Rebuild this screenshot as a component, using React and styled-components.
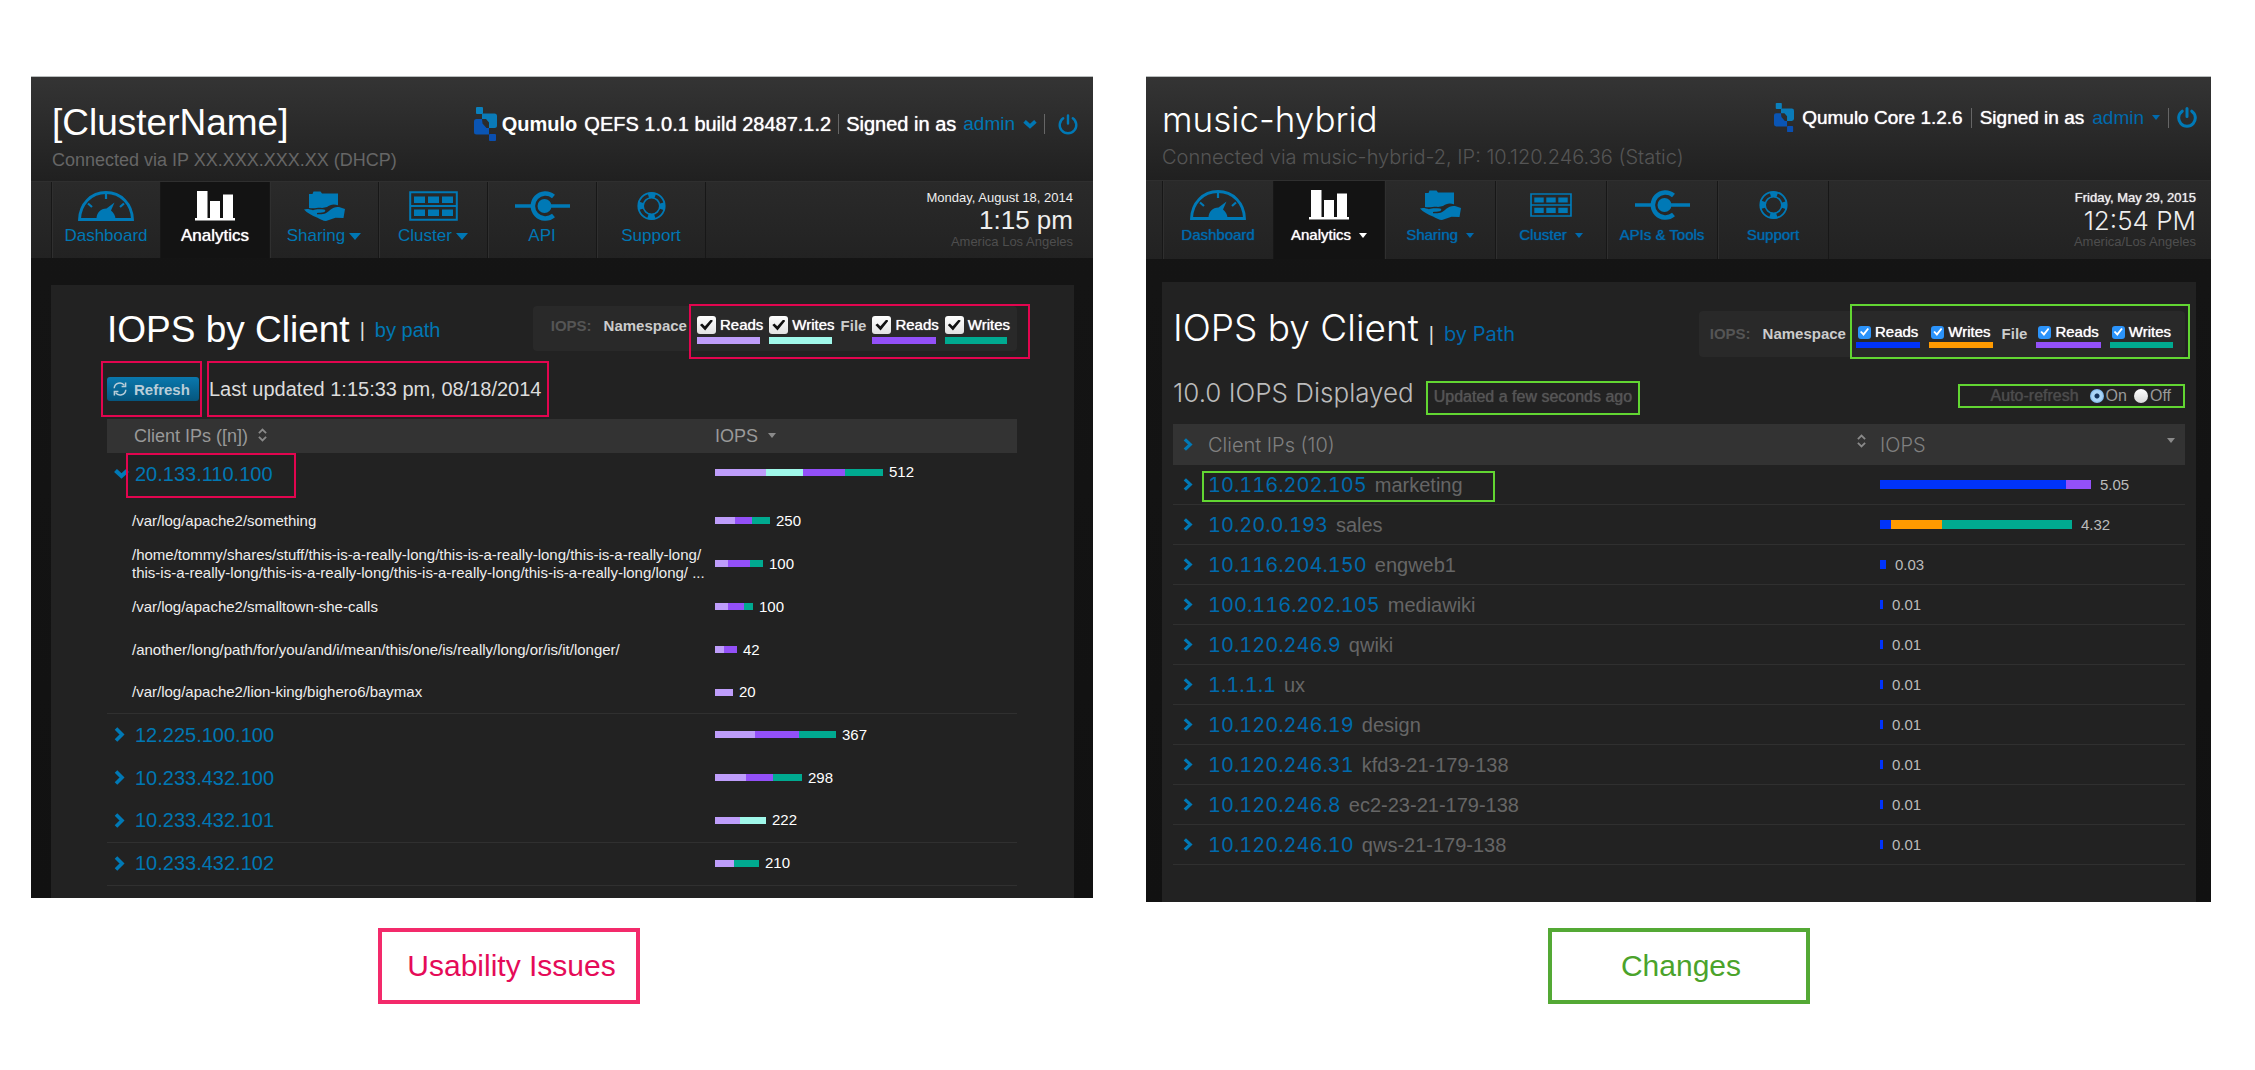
import React from "react";
import styled, { createGlobalStyle, css, ThemeProvider } from "styled-components";

const sans = '"Liberation Sans", Arial, Helvetica, sans-serif';
const light = 'Inter, "Liberation Sans", Arial, sans-serif';

const colors = {
  lavender: "#be9dfa",
  mint: "#a0f8ea",
  violet: "#9350f8",
  green: "#00aa90",
  blue: "#0033fa",
  orange: "#ff9a00",
};

const legacy = {
  name: "legacy",
  link: "#0077b3",
  icon: "#0079b6",
  mark: "#e2054f",
  lightFont: sans,
  lightWeight: 400,
  titleSize: 37,
  headingSize: 37,
  subSize: 18,
  subTop: 5,
  subColor: "#666",
  headerPad: "26px 15px 0 21px",
  headerHeight: 105,
  userTop: 4,
  userGap: 7,
  userSize: 20,
  navHeight: 77,
  navLead: 20,
  tabWidth: 109,
  tabSize: 17,
  clockPad: "7px 20px 0 0",
  bodyPad: "27px 19px 0 20px",
  panelPad: "21px 57px 12px 56px",
  headingLine: 48,
  headingAlign: "center",
  filterTop: 0,
  filterPad: "10px 7px 7px 18px",
  thHeight: 34,
  thSize: 18,
  thColor: "#999",
  ipSize: 20,
  ipGap: 5,
  chevronPad: 7,
  chevronBox: 16,
  valueColor: "#fff",
  valueGap: 6,
  barHeight: 7,
  iopsWidth: 302,
  labelBorder: "#f32a6b",
  labelText: "#e50b58",
};

const current = {
  name: "current",
  link: "#006aad",
  icon: "#0079b6",
  mark: "#62d632",
  lightFont: light,
  lightWeight: 300,
  titleSize: 35,
  headingSize: 37,
  subSize: 20,
  subTop: 6,
  subColor: "#555",
  headerPad: "22px 14px 0 16px",
  headerHeight: 104,
  userTop: 4,
  userGap: 8,
  userSize: 19,
  navHeight: 79,
  navLead: 16,
  tabWidth: 111,
  tabSize: 15,
  clockPad: "8px 15px 0 0",
  bodyPad: "23px 15px 0 16px",
  panelPad: "26px 11px 37px 11px",
  headingLine: 40,
  headingAlign: "baseline",
  filterTop: 3,
  filterPad: "13px 12px 9px 11px",
  thHeight: 41,
  thSize: 20,
  thColor: "#808080",
  ipSize: 20,
  ipGap: 15,
  chevronPad: 10,
  chevronBox: 10,
  valueColor: "#bbb",
  valueGap: 9,
  barHeight: 9,
  iopsWidth: 305,
  labelBorder: "#54a935",
  labelText: "#4ba32b",
};

const GlobalStyle = createGlobalStyle`
  * { box-sizing: border-box; }
  body { margin: 0; background: #fff; font-family: ${sans}; }
  a { text-decoration: none; color: inherit; }
  button { font: inherit; color: inherit; background: none; border: 0; padding: 0; }
  h1, h2, p, figure { margin: 0; font-weight: 400; }
`;

const Board = styled.main`
  display: grid;
  grid-template-columns: minmax(0, 1062fr) minmax(0, 1065fr);
  gap: 53px;
  align-items: start;
  padding: 76px 44px 66px 31px;
`;

const Figure = styled.figure`
  display: flex;
  flex-direction: column;
`;

const Caption = styled.figcaption`
  width: 262px;
  margin: ${(p) => (p.theme.name === "legacy" ? "30px auto 0 347px" : "26px auto 0")};
  border: 4px solid ${(p) => p.theme.labelBorder};
  padding: 20px 0 20px 5px;
  color: ${(p) => p.theme.labelText};
  font-size: 30px;
  line-height: 28px;
  text-align: center;
`;

const Shot = styled.div`
  background: linear-gradient(#151515, #111);
  border-top: 1px solid #b9bdbd;
`;

const Header = styled.header`
  display: flex;
  justify-content: space-between;
  align-items: flex-start;
  height: ${(p) => p.theme.headerHeight - 1}px;
  padding: ${(p) => p.theme.headerPad};
  background: linear-gradient(#343434, #202020);
`;

const ClusterName = styled.h1`
  color: #fff;
  font-family: ${(p) => p.theme.lightFont};
  font-weight: ${(p) => p.theme.lightWeight};
  font-size: ${(p) => p.theme.titleSize}px;
  line-height: 40px;
`;

const Connection = styled.p`
  margin-top: ${(p) => p.theme.subTop}px;
  color: ${(p) => p.theme.subColor};
  font-family: ${(p) => p.theme.lightFont};
  font-weight: ${(p) => p.theme.lightWeight};
  font-size: ${(p) => p.theme.subSize}px;
  line-height: 24px;
`;

const emphasis = css`
  text-shadow: 0 0 1px currentColor;
`;

const UserBar = styled.div`
  display: flex;
  align-items: center;
  gap: ${(p) => p.theme.userGap}px;
  margin-top: ${(p) => p.theme.userTop}px;
  color: #fff;
  font-size: ${(p) => p.theme.userSize}px;
  line-height: 24px;
  white-space: nowrap;
`;

const Brand = styled.span`
  display: flex;
  align-items: center;
  gap: 5px;
  font-weight: 700;
`;

const Product = styled.span`
  ${emphasis}
`;

const Rule = styled.span`
  width: 1px;
  height: 20px;
  background: #666;
`;

const AccountButton = styled.button`
  display: flex;
  align-items: center;
  gap: 8px;
  color: ${(p) => p.theme.link};
  font-size: 19px;
`;

const PowerButton = styled.button`
  display: flex;
  margin-left: ${(p) => (p.theme.name === "legacy" ? 6 : 0)}px;
  color: ${(p) => p.theme.icon};
`;

const NavBar = styled.div`
  display: flex;
  justify-content: space-between;
  height: ${(p) => p.theme.navHeight}px;
  padding-left: ${(p) => p.theme.navLead}px;
  border-top: 1px solid #2f2f2f;
  background: linear-gradient(#2a2a2a, #222);
`;

const Tabs = styled.nav`
  display: flex;
  border-left: 1px solid #171717;
`;

const Tab = styled.a`
  display: flex;
  flex-direction: column;
  align-items: center;
  width: ${(p) => p.theme.tabWidth}px;
  padding-top: 9px;
  border-right: 1px solid #171717;
  box-shadow: inset 1px 0 #2f2f2f;
  color: ${(p) => p.theme.link};
  font-size: ${(p) => p.theme.tabSize}px;
  line-height: 20px;
  white-space: nowrap;
  ${(p) => p.theme.name === "current" && emphasis}
  ${(p) =>
    p.$active &&
    css`
      background: #131313;
      box-shadow: none;
      color: #fff;
      ${emphasis}
    `}
`;

const TabIcon = styled.span`
  display: flex;
  align-items: center;
  height: 30px;
  margin-bottom: 5px;
  color: ${(p) => (p.$active ? "#fff" : p.theme.icon)};
`;

const TabLabel = styled.span`
  display: flex;
  align-items: center;
  gap: ${(p) => (p.theme.name === "legacy" ? 4 : 8)}px;
`;

const Clock = styled.div`
  padding: ${(p) => p.theme.clockPad};
  color: #eee;
  font-size: 13px;
  line-height: 18px;
  text-align: right;
`;

const ClockDate = styled.div`
  ${(p) => p.theme.name === "current" && emphasis}
`;

const ClockTime = styled.div`
  font-family: ${(p) => p.theme.lightFont};
  font-weight: ${(p) => p.theme.lightWeight};
  font-size: 26px;
  line-height: 27px;
`;

const ClockZone = styled.div`
  color: #4e4e4e;
  line-height: 15px;
`;

const Body = styled.div`
  padding: ${(p) => p.theme.bodyPad};
`;

const Panel = styled.section`
  padding: ${(p) => p.theme.panelPad};
  background: #222;
`;

const PanelHead = styled.div`
  display: flex;
  justify-content: space-between;
  align-items: flex-start;
`;

const Heading = styled.div`
  display: flex;
  align-items: ${(p) => p.theme.headingAlign};
  color: #fff;
`;

const HeadingText = styled.h2`
  font-family: ${(p) => p.theme.lightFont};
  font-weight: ${(p) => p.theme.lightWeight};
  font-size: ${(p) => p.theme.headingSize}px;
  line-height: ${(p) => p.theme.headingLine}px;
`;

const HeadingRule = styled.span`
  margin: 0 10px;
  color: #ddd;
  font-size: 20px;
  line-height: 24px;
`;

const HeadingLink = styled.a`
  color: ${(p) => p.theme.link};
  font-family: ${(p) => p.theme.lightFont};
  font-size: 20px;
  line-height: 24px;
`;

const Filters = styled.div`
  display: flex;
  align-items: flex-start;
  margin-top: ${(p) => p.theme.filterTop}px;
  padding: ${(p) => p.theme.filterPad};
  border-radius: 4px;
  background: #292929;
  font-size: 15px;
  line-height: 20px;
`;

const FilterCaption = styled.strong`
  margin-right: 12px;
  color: #555;
`;

const FilterGroupName = styled.strong`
  color: #ccc;
`;

const Marked = styled.div`
  position: relative;
  display: flex;
  gap: ${(p) => p.$gap || 0}px;
  align-items: ${(p) => p.$align || "center"};
  margin: ${(p) => p.$top || 0}px 0 0 ${(p) => p.$left || 0}px;
`;

/* Annotation frame drawn on top of the part it calls out. */
const Frame = styled.span`
  position: absolute;
  inset: ${(p) => p.$inset};
  border: 2px solid ${(p) => p.theme.mark};
  pointer-events: none;
`;

const FilterItem = styled.label`
  display: flex;
  flex-direction: column;
  color: #fff;
`;

const FilterRow = styled.span`
  display: flex;
  align-items: center;
  gap: 4px;
  height: ${(p) => (p.theme.name === "legacy" ? 18 : 16)}px;
  padding: ${(p) => (p.theme.name === "legacy" ? 0 : "0 2px")};
  line-height: 18px;
  ${emphasis}
`;

const Swatch = styled.span`
  height: ${(p) => (p.theme.name === "legacy" ? 7 : 6)}px;
  margin: ${(p) => (p.theme.name === "legacy" ? "3px 3px 0 0" : "2px 0 0")};
  background: ${(p) => p.$color};
`;

const Check = styled.input`
  appearance: none;
  display: flex;
  align-items: center;
  justify-content: center;
  flex: none;
  width: ${(p) => (p.theme.name === "legacy" ? 19 : 13)}px;
  height: ${(p) => (p.theme.name === "legacy" ? 18 : 13)}px;
  margin: 0;
  border-radius: 3px;
  background: ${(p) => (p.theme.name === "legacy" ? "linear-gradient(#fff, #e2e2e2)" : "#2b93fa")};

  &:checked::after {
    content: "";
    width: ${(p) => (p.theme.name === "legacy" ? 13 : 9)}px;
    height: ${(p) => (p.theme.name === "legacy" ? 11 : 8)}px;
    background: ${(p) => (p.theme.name === "legacy" ? "#111" : "#fff")};
    clip-path: polygon(0 50%, 16% 36%, 38% 62%, 84% 0, 100% 12%, 40% 100%);
  }
`;

const StatusRow = styled.div`
  display: flex;
  align-items: center;
  justify-content: ${(p) => (p.theme.name === "legacy" ? "flex-start" : "space-between")};
  height: ${(p) => (p.theme.name === "legacy" ? 24 : 30)}px;
  margin: ${(p) => (p.theme.name === "legacy" ? "23px 0 18px" : "21px 0 16px")};
`;

const RefreshButton = styled.button`
  display: flex;
  align-items: center;
  gap: 7px;
  width: 92px;
  height: 24px;
  padding-left: 6px;
  border-radius: 3px;
  background: linear-gradient(#0a78ad, #05567e);
  color: #b9cdd8;
  font-size: 15px;
  font-weight: 700;
`;

const LastUpdated = styled.span`
  color: #ddd;
  font-size: 20px;
  line-height: 24px;
`;

const Totals = styled.div`
  display: flex;
  align-items: baseline;
  gap: 20px;
`;

const Total = styled.span`
  color: #bbb;
  font-family: ${light};
  font-weight: 300;
  font-size: 26px;
  line-height: 30px;
`;

const Updated = styled.span`
  color: #555;
  font-size: 16px;
  line-height: 20px;
  ${emphasis}
`;

const AutoRefresh = styled.fieldset`
  display: flex;
  align-items: center;
  gap: 7px;
  margin: 0 14px 0 0;
  padding: 0;
  border: 0;
  font-size: 16px;
  line-height: 20px;
`;

const AutoCaption = styled.span`
  margin-right: 4px;
  color: #4c4c4c;
  ${emphasis}
`;

const RadioLabel = styled.label`
  display: flex;
  align-items: center;
  gap: 2px;
  color: #999;
`;

const Radio = styled.input`
  appearance: none;
  width: 14px;
  height: 14px;
  margin: 0;
  border-radius: 50%;
  background: linear-gradient(#fff, #d8d8d8);

  &:checked {
    background: radial-gradient(circle, #12325c 0 2px, #a9d4f7 3px 5px, #77b2e8 7px);
  }
`;

const Table = styled.table`
  width: 100%;
  table-layout: fixed;
  border-collapse: separate;
  border-spacing: 0;
`;

const HeadCell = styled.th`
  width: ${(p) => (p.$narrow ? `${p.theme.iopsWidth}px` : "auto")};
  height: ${(p) => p.theme.thHeight}px;
  padding: 0;
  background: #333;
  color: ${(p) => p.theme.thColor};
  font-family: ${(p) => p.theme.lightFont};
  font-weight: ${(p) => p.theme.lightWeight};
  font-size: ${(p) => p.theme.thSize}px;
  line-height: 20px;
  text-align: left;
`;

const HeadContent = styled.div`
  display: flex;
  align-items: center;
  justify-content: ${(p) => (p.theme.name === "legacy" ? "flex-start" : "space-between")};
  gap: 10px;
  padding: ${(p) => p.$pad || 0};
`;

const SortButton = styled.button`
  display: flex;
  color: #8a8a8a;
  padding-bottom: ${(p) => (p.theme.name === "legacy" ? 2 : 8)}px;
`;

const Cell = styled.td`
  height: ${(p) => p.$height}px;
  padding: 0;
  border-bottom: ${(p) => (p.$line ? "1px solid #303030" : "0")};
  vertical-align: middle;
`;

const ClientCell = styled.div`
  display: flex;
  align-items: center;
  padding: 0 0 ${(p) => p.$lift || 0}px ${(p) => p.theme.chevronPad}px;
  font-family: ${(p) => p.theme.lightFont};
  font-size: ${(p) => p.theme.ipSize}px;
  font-variant-numeric: tabular-nums;
  line-height: 24px;
`;

const ChevronButton = styled.button`
  display: flex;
  width: ${(p) => p.theme.chevronBox}px;
  margin-right: ${(p) => p.theme.ipGap}px;
  color: ${(p) => p.theme.icon};
`;

const ClientLink = styled.a`
  color: ${(p) => p.theme.link};
`;

const ClientName = styled.span`
  margin-left: 8px;
  color: #666;
  font-family: ${sans};
`;

const Path = styled.div`
  padding-left: 25px;
  color: #eee;
  font-size: 15px;
  line-height: 18px;
  white-space: nowrap;
`;

const BarCell = styled.div`
  display: flex;
  align-items: center;
  padding-bottom: ${(p) => p.$lift || 0}px;
  color: ${(p) => p.theme.valueColor};
  font-size: 15px;
  line-height: 18px;
`;

const Segment = styled.span`
  height: ${(p) => p.theme.barHeight}px;
  background: ${(p) => p.$color};
`;

const Value = styled.span`
  margin-left: ${(p) => p.theme.valueGap}px;
`;

/* ---------- icons ---------- */

const Logo = ({ height }) => (
  <svg width={Math.round((height * 23) / 34)} height={height} viewBox="0 0 23 34" preserveAspectRatio="none" aria-hidden="true">
    <rect x="2" y="0" width="7" height="7" rx="1" fill="#0a80bd" />
    <path d="M8 6.500h12.500a2.500 2.500 0 0 1 2.500 2.500v9.500a2.500 2.500 0 0 1-2.500 2.500H15v-5.500L12 12H8z" fill="#0a7bb8" />
    <path d="M2.500 12H8l.5 4.500 4 4.500H15v6.500H2.500A2.500 2.500 0 0 1 0 25V14.500A2.500 2.500 0 0 1 2.500 12z" fill="#0a55b4" />
    <rect x="15" y="27" width="7" height="7" rx="1" fill="#0a4fb0" />
  </svg>
);

const PowerIcon = ({ heavy }) => (
  <svg width="20" height="21" viewBox="0 0 20 21" fill="none" stroke="currentColor" strokeWidth={heavy ? 3 : 2.4} strokeLinecap="round" aria-hidden="true">
    <path d="M5.2 4.2a8.3 8.3 0 1 0 9.6 0M10 1.5v8" />
  </svg>
);

const Caret = ({ w = 8, h = 5 }) => (
  <svg width={w} height={h} viewBox="0 0 10 6" preserveAspectRatio="none" aria-hidden="true">
    <path d="M0 0h10L5 6z" fill="currentColor" />
  </svg>
);

const ChevronDown = ({ w = 15, h = 10 }) => (
  <svg width={w} height={h} viewBox="0 0 15 10" aria-hidden="true">
    <path d="M1.500 1.500l6 5.500 6-5.500" fill="none" stroke="currentColor" strokeWidth="4.200" />
  </svg>
);

const ChevronRight = ({ w = 11, h = 15 }) => (
  <svg width={w} height={h} viewBox="0 0 11 15" preserveAspectRatio="none" aria-hidden="true">
    <path d="M2 1.5l6 6-6 6" fill="none" stroke="currentColor" strokeWidth="3.6" />
  </svg>
);

const SortIcon = () => (
  <svg width="9" height="14" viewBox="0 0 10 14" fill="none" stroke="currentColor" strokeWidth="2" aria-hidden="true">
    <path d="M1 5l4-4 4 4M1 9l4 4 4-4" />
  </svg>
);

const RefreshIcon = () => (
  <svg width="14" height="14" viewBox="0 0 14 14" fill="none" stroke="currentColor" strokeWidth="1.5" aria-hidden="true">
    <path d="M1.2 6.2A5.6 5.6 0 0 1 11.4 3.4M12.8 7.8A5.6 5.6 0 0 1 2.6 10.6" />
    <path d="M12.6.4v4H8.6M1.4 13.6v-4h4" />
  </svg>
);

const DashboardIcon = () => (
  <svg width="56" height="30" viewBox="0 0 56 30" aria-hidden="true">
    <path d="M1.500 28.500C2 13 13 1.500 28 1.500s26 11.500 26.500 27z" fill="none" stroke="currentColor" strokeWidth="2.800" />
    <path d="M18.500 28c0-6 4-10.500 10-10.500L36.500 11.500l-3.500 8c2.500 2 4.500 5 4.500 8.500z" fill="currentColor" />
    <path d="M28 3v5M10 12.500l4 3.500M46 12.500l-4 3.500" stroke="currentColor" strokeWidth="2.200" />
  </svg>
);

const AnalyticsIcon = () => (
  <svg width="40" height="30" viewBox="0 0 40 30" fill="currentColor" aria-hidden="true">
    <path d="M2 0h10.500v27H15V10h10v17h3V3.500h10V27h2v2.500H0V27h2z" />
  </svg>
);

const SharingIcon = () => (
  <svg width="41" height="30" viewBox="0 0 41 30" fill="currentColor" aria-hidden="true">
    <path d="M5 3h3.500L9.500.5h7L18 2.500h16v11.800c-4-1.500-8-.8-11 1.700l-5 1c-4-.8-7 1-13 0z" />
    <path d="M0 18.500c3-1.200 6-.2 9 .8 4-1.500 7-.8 11-.8 2 .5 1.500 2.300-.5 2.700-2 .5-4 .4-6.500.8v1.200c7 .6 10-1.200 13-4.200 3-2.500 6-3.500 9-3l6 2-1.500 9-8-.3L22 30c-3 0-6-2-9-3.500C8 24.500 3 22 0 18.500z" />
  </svg>
);

const ClusterIcon = ({ w = 49, h = 30 }) => (
  <svg width={w} height={h} viewBox="0 0 49 30" preserveAspectRatio="none" aria-hidden="true">
    <path d="M1.200 1.200h46.600v27.600H1.200zM1 15h47" fill="none" stroke="currentColor" strokeWidth="2" />
    <path d="M5 5.500h11v6.500H5zM19 5.500h11v6.500H19zM33 5.500h11v6.500H33zM5 18.500h11V25H5zM19 18.500h11V25H19zM33 18.500h11V25H33z" fill="currentColor" />
  </svg>
);

const ApiIcon = () => (
  <svg width="55" height="30" viewBox="0 0 55 30" aria-hidden="true">
    <path d="M0 15h17M30 15h25" stroke="currentColor" strokeWidth="3.500" />
    <circle cx="29.500" cy="15" r="7" fill="currentColor" />
    <path d="M38.500 5.500A12.500 12.500 0 1 0 38.500 24.500" fill="none" stroke="currentColor" strokeWidth="4.500" />
  </svg>
);

const SupportIcon = () => (
  <svg width="29" height="30" viewBox="0 0 29 30" fill="none" stroke="currentColor" aria-hidden="true">
    <circle cx="14.500" cy="15" r="13.200" strokeWidth="1.800" />
    <circle cx="14.500" cy="15" r="8.300" strokeWidth="1.600" />
    <circle cx="14.500" cy="15" r="10.800" strokeWidth="5.500" strokeDasharray="7 9.960" strokeDashoffset="3.500" />
  </svg>
);

/* ---------- shared parts ---------- */

const tabIcons = {
  dashboard: DashboardIcon,
  analytics: AnalyticsIcon,
  sharing: SharingIcon,
  cluster: ClusterIcon,
  api: ApiIcon,
  support: SupportIcon,
};

function Navigation({ tabs, date, time, zone, caret }) {
  return (
    <NavBar>
      <Tabs>
        {tabs.map((tab) => {
          const Icon = tabIcons[tab.icon];
          return (
            <Tab key={tab.label} href="#" $active={tab.active}>
              <TabIcon $active={tab.active}>
                <Icon {...tab.iconSize} />
              </TabIcon>
              <TabLabel>
                {tab.label}
                {tab.menu && <Caret {...caret} />}
              </TabLabel>
            </Tab>
          );
        })}
      </Tabs>
      <Clock>
        <ClockDate>{date}</ClockDate>
        <ClockTime>{time}</ClockTime>
        <ClockZone>{zone}</ClockZone>
      </Clock>
    </NavBar>
  );
}

function Filter({ label, color }) {
  return (
    <FilterItem>
      <FilterRow>
        <Check type="checkbox" defaultChecked />
        {label}
      </FilterRow>
      <Swatch $color={colors[color]} />
    </FilterItem>
  );
}

function FilterBox({ swatches, inset, gap }) {
  return (
    <Filters>
      <FilterCaption>IOPS:</FilterCaption>
      <FilterGroupName>Namespace</FilterGroupName>
      <Marked $gap={gap} $align="flex-start" $left={10}>
        <Filter label="Reads" color={swatches[0]} />
        <Filter label="Writes" color={swatches[1]} />
        <FilterGroupName>File</FilterGroupName>
        <Filter label="Reads" color={swatches[2]} />
        <Filter label="Writes" color={swatches[3]} />
        <Frame $inset={inset} />
      </Marked>
    </Filters>
  );
}

function Bars({ segments, value, lift }) {
  return (
    <BarCell $lift={lift}>
      {segments.map(([color, width]) => (
        <Segment key={color} $color={colors[color]} style={{ width }} />
      ))}
      <Value>{value}</Value>
    </BarCell>
  );
}

/* ---------- first version ---------- */

const legacyTabs = [
  { label: "Dashboard", icon: "dashboard" },
  { label: "Analytics", icon: "analytics", active: true },
  { label: "Sharing", icon: "sharing", menu: true },
  { label: "Cluster", icon: "cluster", menu: true },
  { label: "API", icon: "api" },
  { label: "Support", icon: "support" },
];

const paths = [
  { lines: ["/var/log/apache2/something"], value: 250, segments: [["lavender", 20], ["violet", 17], ["green", 18]] },
  {
    lines: [
      "/home/tommy/shares/stuff/this-is-a-really-long/this-is-a-really-long/this-is-a-really-long/",
      "this-is-a-really-long/this-is-a-really-long/this-is-a-really-long/this-is-a-really-long/long/ ...",
    ],
    value: 100,
    segments: [["lavender", 13], ["violet", 22], ["green", 13]],
  },
  { lines: ["/var/log/apache2/smalltown-she-calls"], value: 100, segments: [["lavender", 13], ["violet", 16], ["green", 9]] },
  { lines: ["/another/long/path/for/you/and/i/mean/this/one/is/really/long/or/is/it/longer/"], value: 42, segments: [["lavender", 9], ["violet", 13]] },
  { lines: ["/var/log/apache2/lion-king/bighero6/baymax"], value: 20, segments: [["lavender", 18]] },
];

const legacyClients = [
  { ip: "12.225.100.100", value: 367, segments: [["lavender", 40], ["violet", 44], ["green", 37]] },
  { ip: "10.233.432.100", value: 298, segments: [["lavender", 31], ["violet", 27], ["green", 29]] },
  { ip: "10.233.432.101", value: 222, segments: [["lavender", 25], ["mint", 26]], line: true },
  { ip: "10.233.432.102", value: 210, segments: [["lavender", 19], ["green", 25]], line: true },
];

function LegacyScreen() {
  return (
    <Shot>
      <Header>
        <div>
          <ClusterName>[ClusterName]</ClusterName>
          <Connection>Connected via IP XX.XXX.XXX.XX (DHCP)</Connection>
        </div>
        <UserBar>
          <Brand>
            <Logo height={34} />
            Qumulo
          </Brand>
          <Product>QEFS 1.0.1 build 28487.1.2</Product>
          <Rule />
          <Product>Signed in as</Product>
          <AccountButton type="button">
            admin
            <ChevronDown w={14} h={9} />
          </AccountButton>
          <Rule />
          <PowerButton type="button" aria-label="Sign out">
            <PowerIcon />
          </PowerButton>
        </UserBar>
      </Header>
      <Navigation
        tabs={legacyTabs}
        date="Monday, August 18, 2014"
        time="1:15 pm"
        zone="America Los Angeles"
        caret={{ w: 12, h: 7 }}
      />
      <Body>
        <Panel>
          <PanelHead>
            <Heading>
              <HeadingText>IOPS by Client</HeadingText>
              <HeadingRule>|</HeadingRule>
              <HeadingLink href="#">by path</HeadingLink>
            </Heading>
            <FilterBox swatches={["lavender", "mint", "violet", "green"]} gap={6} inset="-12px -20px -15px -8px" />
          </PanelHead>
          <StatusRow>
            <Marked>
              <RefreshButton type="button">
                <RefreshIcon />
                Refresh
              </RefreshButton>
              <Frame $inset="-16px -3px -16px -6px" />
            </Marked>
            <Marked $left={10}>
              <LastUpdated>Last updated 1:15:33 pm, 08/18/2014</LastUpdated>
              <Frame $inset="-16px -7px -16px -2px" />
            </Marked>
          </StatusRow>
          <Table>
            <thead>
              <tr>
                <HeadCell>
                  <HeadContent $pad="0 0 0 27px">
                    Client IPs ([n])
                    <SortButton type="button" aria-label="Sort by client">
                      <SortIcon />
                    </SortButton>
                  </HeadContent>
                </HeadCell>
                <HeadCell $narrow>
                  <HeadContent>
                    IOPS
                    <SortButton type="button" aria-label="Sort by IOPS">
                      <Caret />
                    </SortButton>
                  </HeadContent>
                </HeadCell>
              </tr>
            </thead>
            <tbody>
              <tr>
                <Cell $height={46}>
                  <ClientCell $lift={4}>
                    <ChevronButton type="button" aria-label="Collapse">
                      <ChevronDown />
                    </ChevronButton>
                    <Marked>
                      <ClientLink href="#">20.133.110.100</ClientLink>
                      <Frame $inset="-9px -23px -12px -9px" />
                    </Marked>
                  </ClientCell>
                </Cell>
                <Cell $height={46}>
                  <Bars lift={8} value={512} segments={[["lavender", 51], ["mint", 37], ["violet", 42], ["green", 38]]} />
                </Cell>
              </tr>
              {paths.map((row, i) => (
                <tr key={row.lines[0]}>
                  <Cell $height={43} $line={i === paths.length - 1}>
                    <Path>
                      {row.lines.map((line) => (
                        <div key={line}>{line}</div>
                      ))}
                    </Path>
                  </Cell>
                  <Cell $height={43} $line={i === paths.length - 1}>
                    <Bars value={row.value} segments={row.segments} />
                  </Cell>
                </tr>
              ))}
              {legacyClients.map((row) => (
                <tr key={row.ip}>
                  <Cell $height={43} $line={row.line}>
                    <ClientCell $lift={2}>
                      <ChevronButton type="button" aria-label="Expand">
                        <ChevronRight />
                      </ChevronButton>
                      <ClientLink href="#">{row.ip}</ClientLink>
                    </ClientCell>
                  </Cell>
                  <Cell $height={43} $line={row.line}>
                    <Bars lift={2} value={row.value} segments={row.segments} />
                  </Cell>
                </tr>
              ))}
            </tbody>
          </Table>
        </Panel>
      </Body>
    </Shot>
  );
}

/* ---------- revised version ---------- */

const currentTabs = [
  { label: "Dashboard", icon: "dashboard" },
  { label: "Analytics", icon: "analytics", active: true, menu: true },
  { label: "Sharing", icon: "sharing", menu: true },
  { label: "Cluster", icon: "cluster", menu: true, iconSize: { w: 42, h: 24 } },
  { label: "APIs & Tools", icon: "api" },
  { label: "Support", icon: "support" },
];

const currentClients = [
  { ip: "10.116.202.105", name: "marketing", value: "5.05", segments: [["blue", 186], ["violet", 25]], marked: true },
  { ip: "10.20.0.193", name: "sales", value: "4.32", segments: [["blue", 11], ["orange", 51], ["green", 130]] },
  { ip: "10.116.204.150", name: "engweb1", value: "0.03", segments: [["blue", 6]] },
  { ip: "100.116.202.105", name: "mediawiki", value: "0.01", segments: [["blue", 3]] },
  { ip: "10.120.246.9", name: "qwiki", value: "0.01", segments: [["blue", 3]] },
  { ip: "1.1.1.1", name: "ux", value: "0.01", segments: [["blue", 3]] },
  { ip: "10.120.246.19", name: "design", value: "0.01", segments: [["blue", 3]] },
  { ip: "10.120.246.31", name: "kfd3-21-179-138", value: "0.01", segments: [["blue", 3]] },
  { ip: "10.120.246.8", name: "ec2-23-21-179-138", value: "0.01", segments: [["blue", 3]] },
  { ip: "10.120.246.10", name: "qws-21-179-138", value: "0.01", segments: [["blue", 3]] },
];

function CurrentScreen() {
  return (
    <Shot>
      <Header>
        <div>
          <ClusterName>music-hybrid</ClusterName>
          <Connection>Connected via music-hybrid-2, IP: 10.120.246.36 (Static)</Connection>
        </div>
        <UserBar>
          <Logo height={29} />
          <Product>Qumulo Core 1.2.6</Product>
          <Rule />
          <Product>Signed in as</Product>
          <AccountButton type="button">
            admin
            <Caret />
          </AccountButton>
          <Rule />
          <PowerButton type="button" aria-label="Sign out">
            <PowerIcon heavy />
          </PowerButton>
        </UserBar>
      </Header>
      <Navigation
        tabs={currentTabs}
        date="Friday, May 29, 2015"
        time="12:54 PM"
        zone="America/Los Angeles"
        caret={{ w: 8, h: 5 }}
      />
      <Body>
        <Panel>
          <PanelHead>
            <Heading>
              <HeadingText>IOPS by Client</HeadingText>
              <HeadingRule>|</HeadingRule>
              <HeadingLink href="#">by Path</HeadingLink>
            </Heading>
            <FilterBox swatches={["blue", "orange", "violet", "green"]} gap={9} inset="-20px -17px -11px -6px" />
          </PanelHead>
          <StatusRow>
            <Totals>
              <Total>10.0 IOPS Displayed</Total>
              <Marked>
                <Updated>Updated a few seconds ago</Updated>
                <Frame $inset="-6px -8px -8px -8px" />
              </Marked>
            </Totals>
            <Marked $top={6}>
              <AutoRefresh>
                <AutoCaption>Auto-refresh</AutoCaption>
                <RadioLabel>
                  <Radio type="radio" name="auto-refresh" defaultChecked />
                  On
                </RadioLabel>
                <RadioLabel>
                  <Radio type="radio" name="auto-refresh" />
                  Off
                </RadioLabel>
              </AutoRefresh>
              <Frame $inset="-2px 0 -2px -33px" />
            </Marked>
          </StatusRow>
          <Table>
            <thead>
              <tr>
                <HeadCell>
                  <HeadContent $pad="0 14px 0 10px">
                    <Marked>
                      <ChevronButton type="button" aria-label="Expand all">
                        <ChevronRight w={10} h={13} />
                      </ChevronButton>
                      Client IPs (10)
                    </Marked>
                    <SortButton type="button" aria-label="Sort by client">
                      <SortIcon />
                    </SortButton>
                  </HeadContent>
                </HeadCell>
                <HeadCell $narrow>
                  <HeadContent $pad="0 10px 0 0">
                    IOPS
                    <SortButton type="button" aria-label="Sort by IOPS">
                      <Caret />
                    </SortButton>
                  </HeadContent>
                </HeadCell>
              </tr>
            </thead>
            <tbody>
              {currentClients.map((row) => (
                <tr key={row.ip}>
                  <Cell $height={40} $line>
                    <ClientCell>
                      <ChevronButton type="button" aria-label="Expand">
                        <ChevronRight w={10} h={13} />
                      </ChevronButton>
                      <Marked>
                        <ClientLink href="#">{row.ip}</ClientLink>
                        <ClientName>{row.name}</ClientName>
                        {row.marked && <Frame $inset="-2px -32px -5px -6px" />}
                      </Marked>
                    </ClientCell>
                  </Cell>
                  <Cell $height={40} $line>
                    <Bars value={row.value} segments={row.segments} />
                  </Cell>
                </tr>
              ))}
            </tbody>
          </Table>
        </Panel>
      </Body>
    </Shot>
  );
}

export default function App() {
  return (
    <>
      <GlobalStyle />
      <Board>
        <ThemeProvider theme={legacy}>
          <Figure>
            <LegacyScreen />
            <Caption>Usability Issues</Caption>
          </Figure>
        </ThemeProvider>
        <ThemeProvider theme={current}>
          <Figure>
            <CurrentScreen />
            <Caption>Changes</Caption>
          </Figure>
        </ThemeProvider>
      </Board>
    </>
  );
}
